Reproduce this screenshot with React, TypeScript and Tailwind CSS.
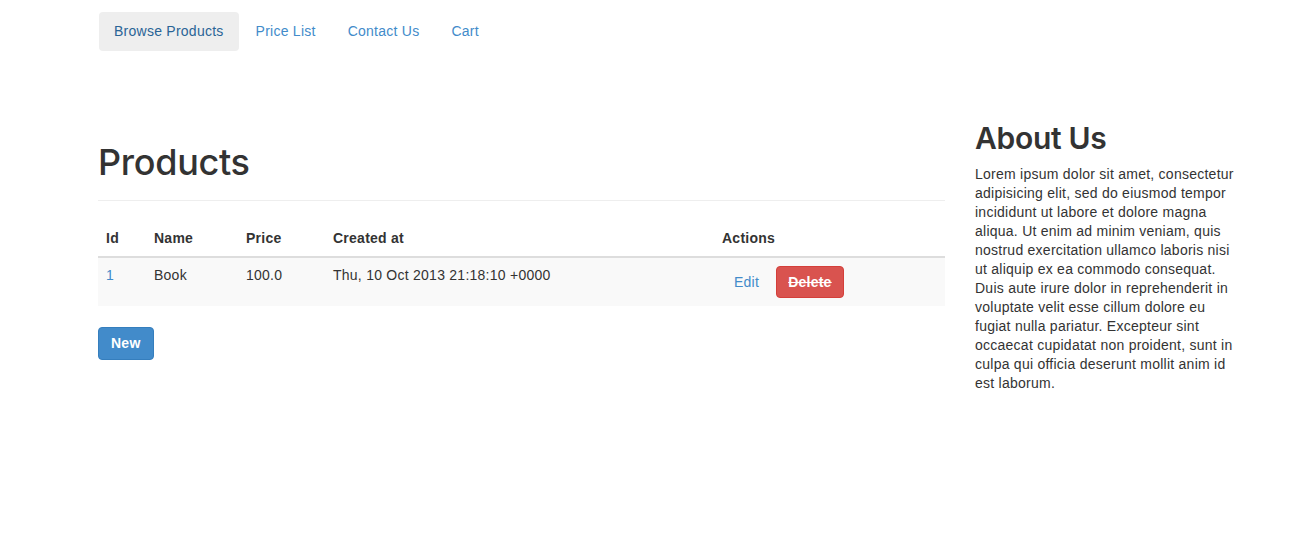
import React from "react";

const NAV = ["Browse Products", "Price List", "Contact Us", "Cart"];

const LOREM =
  "Lorem ipsum dolor sit amet, consectetur adipisicing elit, sed do eiusmod tempor incididunt ut labore et dolore magna aliqua. Ut enim ad minim veniam, quis nostrud exercitation ullamco laboris nisi ut aliquip ex ea commodo consequat. Duis aute irure dolor in reprehenderit in voluptate velit esse cillum dolore eu fugiat nulla pariatur. Excepteur sint occaecat cupidatat non proident, sunt in culpa qui officia deserunt mollit anim id est laborum.";

const HEADING_FONT = { fontFamily: "Inter, \"Liberation Sans\", sans-serif" };

export default function App() {
  return (
    <div
      className="min-h-screen bg-white text-[14px] leading-[19px] tracking-[0.25px] text-[#333333]"
      style={{ fontFamily: '"Liberation Sans", Arial, sans-serif' }}
    >
      <div className="w-[1140px] pl-[98px] box-content">
        {/* Nav pills */}
        <ul className="flex gap-[2px] pt-[12px] pl-px">
          {NAV.map((item, i) => (
            <li key={item}>
              <a
                href="#"
                className={
                  i === 0
                    ? "block rounded-[4px] bg-[#eeeeee] px-[15px] py-[10px] text-[#2a6496]"
                    : "block rounded-[4px] px-[15px] py-[10px] text-[#428bca]"
                }
              >
                {item}
              </a>
            </li>
          ))}
        </ul>

        <div className="flex gap-[30px] pt-[51px]">
          {/* Main column */}
          <div className="w-[847px]">
            <div className="mt-[40px] border-b border-[#eeeeee] pb-[8px]">
              <h1
                className="mb-[10px] text-[36px] font-medium leading-[40px] tracking-[-0.3px]"
                style={HEADING_FONT}
              >
                Products
              </h1>
            </div>

            <table className="mt-[19px] w-full border-collapse text-left">
              <thead>
                <tr className="border-b-2 border-[#dddddd]">
                  <th className="w-[48px] p-[8px] font-bold leading-[20px]">Id</th>
                  <th className="w-[92px] p-[8px] font-bold leading-[20px]">Name</th>
                  <th className="w-[87px] p-[8px] font-bold leading-[20px]">Price</th>
                  <th className="w-[389px] p-[8px] font-bold leading-[20px]">Created at</th>
                  <th className="p-[8px] font-bold leading-[20px]">Actions</th>
                </tr>
              </thead>
              <tbody>
                <tr className="bg-[#f9f9f9] align-top">
                  <td className="p-[8px]">
                    <a href="#" className="text-[#428bca]">1</a>
                  </td>
                  <td className="p-[8px]">Book</td>
                  <td className="p-[8px]">100.0</td>
                  <td className="p-[8px]">Thu, 10 Oct 2013 21:18:10 +0000</td>
                  <td className="p-[8px]">
                    <div className="flex items-center gap-[5px]">
                      <a
                        href="#"
                        className="flex h-[32px] items-center px-[12px] text-[#428bca]"
                      >
                        Edit
                      </a>
                      <button className="h-[32px] rounded-[4px] border border-[#d43f3a] bg-[#d9534f] px-[11px] font-bold text-white line-through">
                        Delete
                      </button>
                    </div>
                  </td>
                </tr>
              </tbody>
            </table>

            <button className="mt-[21px] h-[33px] rounded-[4px] border border-[#357ebd] bg-[#428bca] px-[12px] font-bold text-white">
              New
            </button>
          </div>

          {/* Sidebar */}
          <div className="w-[263px]">
            <h2
              className="mt-[20px] mb-[10px] text-[30px] font-semibold leading-[33px] tracking-[-0.3px]"
              style={HEADING_FONT}
            >
              About Us
            </h2>
            <p>{LOREM}</p>
          </div>
        </div>
      </div>
    </div>
  );
}
